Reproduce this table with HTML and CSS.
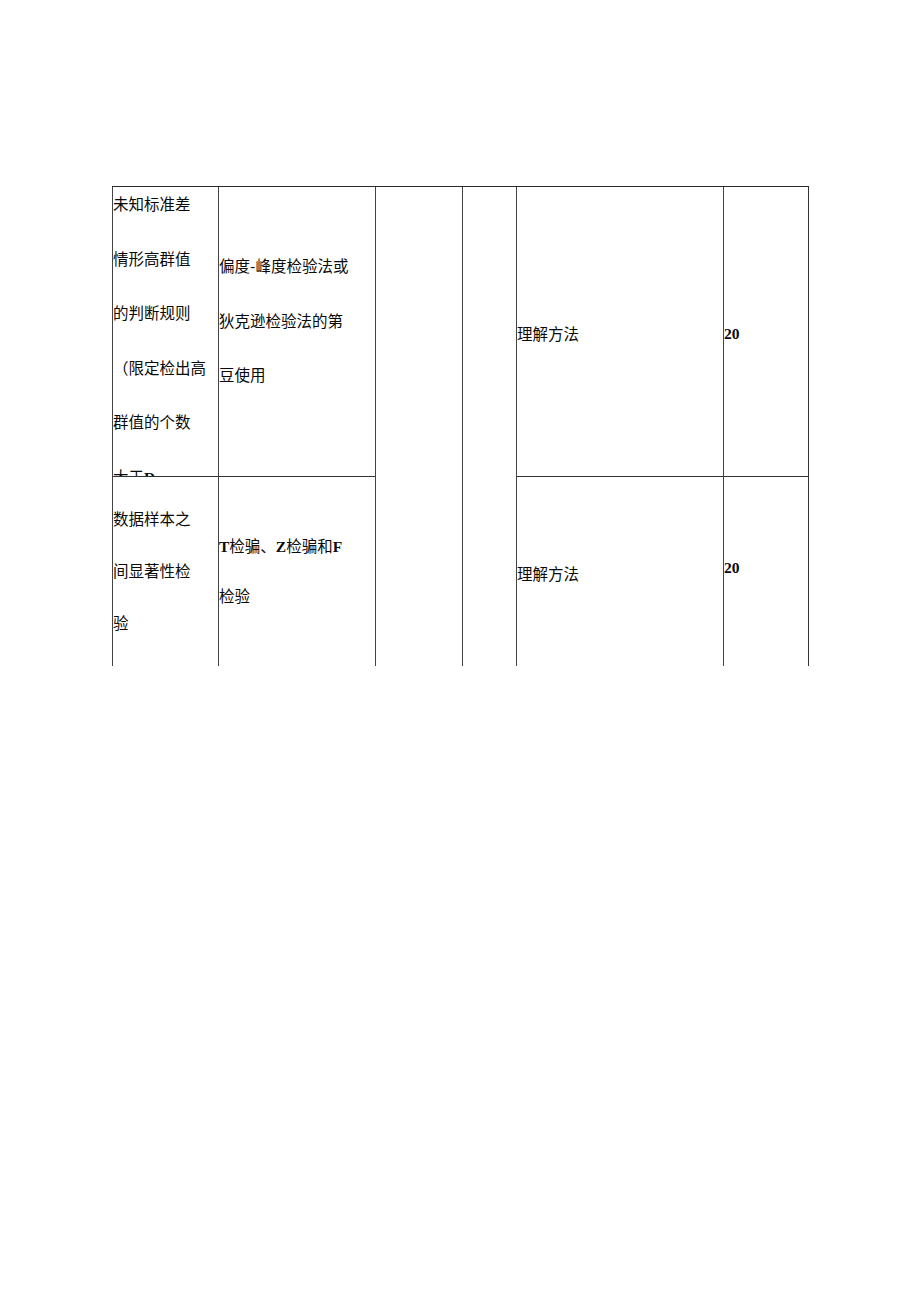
FILE: index.html
```html
<!DOCTYPE html>
<html lang="zh">
<head>
<meta charset="utf-8">
<title>表格</title>
<link rel="stylesheet" href="styles.css">
</head>
<body>
<div class="page">
  <div class="grid">
    <div class="cell c1 r1 p-a">
      <div class="ln">未知标准差</div>
      <div class="ln">情形高群值</div>
      <div class="ln">的判断规则</div>
      <div class="ln">（限定检出高</div>
      <div class="ln">群值的个数</div>
      <div class="ln">大于<b class="lat">D</b></div>
    </div>
    <div class="cell c2 r1 p-b">
      <div class="ln">偏度-峰度检验法或</div>
      <div class="ln">狄克逊检验法的第</div>
      <div class="ln">豆使用</div>
    </div>
    <div class="cell c3 span"></div>
    <div class="cell c4 span"></div>
    <div class="cell c5 r1 p-c"><div class="ln">理解方法</div></div>
    <div class="cell c6 r1 p-d"><div class="ln"><b class="lat">20</b></div></div>

    <div class="cell c1 r2 p-e">
      <div class="ln">数据样本之</div>
      <div class="ln">间显著性检</div>
      <div class="ln">验</div>
    </div>
    <div class="cell c2 r2 p-f">
      <div class="ln"><b class="lat">T</b>检骗、<b class="lat">Z</b>检骗和<b class="lat">F</b></div>
      <div class="ln">检验</div>
    </div>
    <div class="cell c5 r2 p-g"><div class="ln">理解方法</div></div>
    <div class="cell c6 r2 p-h"><div class="ln"><b class="lat">20</b></div></div>
  </div>
</div>
</body>
</html>
```

FILE: styles.css
```css
html, body {
  margin: 0;
  padding: 0;
  background: #ffffff;
}

body {
  font-family: "Noto Sans CJK SC", "Noto Sans", sans-serif;
  font-size: 15.5px;
  color: #0a0a0a;
}

.page {
  width: 920px;
  height: 1301px;
  padding: 186px 0 0 112px;
  box-sizing: border-box;
}

.grid {
  display: grid;
  grid-template-columns: 106px 157px 87px 54px 207px 85px;
  grid-template-rows: 289px 190px;
  width: 697px;
  border-top: 1px solid #2a2a2a;
  border-right: 1px solid #333333;
  box-sizing: border-box;
}

.cell {
  border-left: 1px solid #444444;
  box-sizing: border-box;
  overflow: hidden;
  white-space: nowrap;
}

.c1 { grid-column: 1; }
.c2 { grid-column: 2; }
.c3 { grid-column: 3; }
.c4 { grid-column: 4; }
.c5 { grid-column: 5; }
.c6 { grid-column: 6; }
.r1 { grid-row: 1; }
.r2 { grid-row: 2; border-top: 1px solid #333333; }
.span { grid-row: 1 / span 2; }

.ln {
  line-height: 20px;
  height: 20px;
}

.lat {
  font-family: "Liberation Serif", "Times New Roman", serif;
  font-weight: bold;
}

/* row 1 column 1: six lines, 54.6px apart */
.p-a { padding-top: 6px; }
.p-a .ln { margin-bottom: 34.6px; }

/* row 1 column 2 */
.p-b { padding-top: 68px; }
.p-b .ln { margin-bottom: 34.5px; }

.p-c { padding-top: 136px; }
.p-d { padding-top: 135px; }

/* row 2 */
.p-e { padding-top: 31px; }
.p-e .ln { margin-bottom: 32px; }

.p-f { padding-top: 58px; }
.p-f .ln { margin-bottom: 30px; }

.p-g { padding-top: 86px; }
.p-h { padding-top: 79px; }
```
